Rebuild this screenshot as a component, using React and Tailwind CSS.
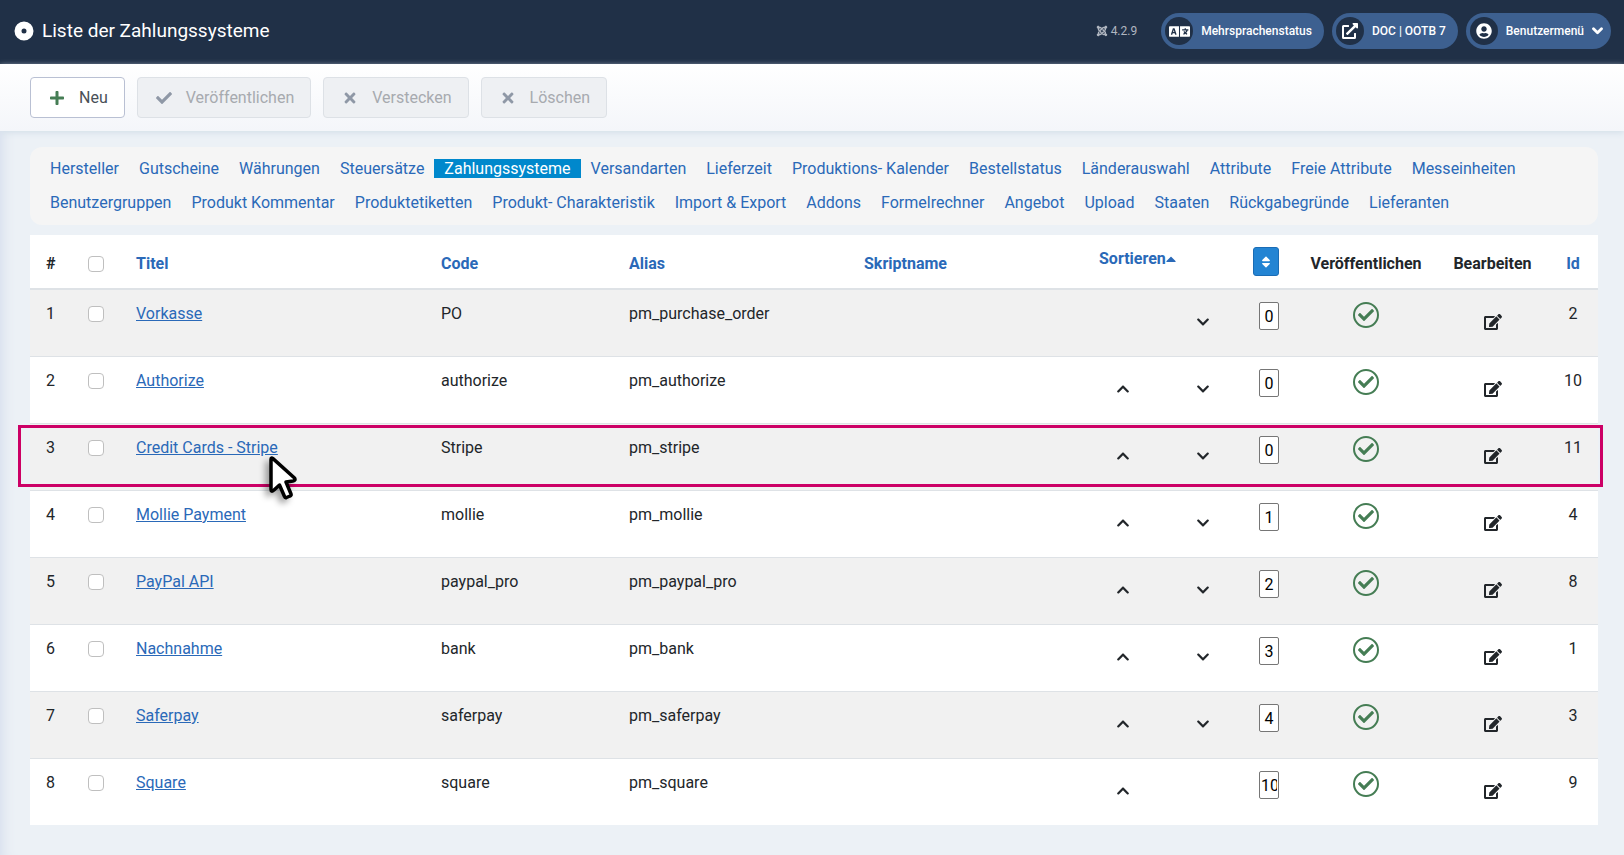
import { useState } from "react";
import {
  FaCaretUp,
  FaCheck,
  FaChevronDown,
  FaChevronUp,
  FaEdit,
  FaExternalLinkAlt,
  FaJoomla,
  FaPlus,
  FaSort,
  FaTimes,
  FaUserCircle,
} from "react-icons/fa";

const menu = [
  "Hersteller",
  "Gutscheine",
  "Währungen",
  "Steuersätze",
  "Zahlungssysteme",
  "Versandarten",
  "Lieferzeit",
  "Produktions- Kalender",
  "Bestellstatus",
  "Länderauswahl",
  "Attribute",
  "Freie Attribute",
  "Messeinheiten",
  "Benutzergruppen",
  "Produkt Kommentar",
  "Produktetiketten",
  "Produkt- Charakteristik",
  "Import & Export",
  "Addons",
  "Formelrechner",
  "Angebot",
  "Upload",
  "Staaten",
  "Rückgabegründe",
  "Lieferanten",
];

const payments = [
  { id: 2, title: "Vorkasse", code: "PO", alias: "pm_purchase_order", order: 0 },
  { id: 10, title: "Authorize", code: "authorize", alias: "pm_authorize", order: 0 },
  { id: 11, title: "Credit Cards - Stripe", code: "Stripe", alias: "pm_stripe", order: 0 },
  { id: 4, title: "Mollie Payment", code: "mollie", alias: "pm_mollie", order: 1 },
  { id: 8, title: "PayPal API", code: "paypal_pro", alias: "pm_paypal_pro", order: 2 },
  { id: 1, title: "Nachnahme", code: "bank", alias: "pm_bank", order: 3 },
  { id: 3, title: "Saferpay", code: "saferpay", alias: "pm_saferpay", order: 4 },
  { id: 9, title: "Square", code: "square", alias: "pm_square", order: 10 },
];

const MARKED_ID = 11;

function LanguageIcon() {
  return (
    <svg viewBox="0 0 640 512" className="h-[17px] w-[21px]" fill="currentColor" aria-hidden="true">
      <path d="M152.1 236.2c-3.5-12.1-7.8-33.2-7.8-33.2h-.5s-4.3 21.1-7.8 33.2l-11.1 37.5H163zM616 96H336v320h280c13.3 0 24-10.7 24-24V120c0-13.3-10.7-24-24-24zm-24 120c0 6.6-5.4 12-12 12h-11.4c-6.9 23.6-21.7 47.4-42.7 69.9 8.4 6.4 17.1 12.5 26.1 18 5.5 3.4 7.3 10.5 4.1 16.2l-7.9 13.9c-3.4 5.9-10.9 7.8-16.7 4.3-12.6-7.8-24.5-16.1-35.4-24.9-10.9 8.7-22.7 17.1-35.4 24.9-5.8 3.5-13.3 1.6-16.7-4.3l-7.9-13.9c-3.2-5.6-1.4-12.8 4.2-16.2 9.3-5.7 18-11.7 26.1-18-7.9-8.4-14.9-17-21-25.7-4-5.7-2.2-13.6 3.7-17.1l6.5-3.9 7.3-4.3c5.4-3.2 12.4-1.7 16 3.4 5 7 10.8 14 17.4 20.9 13.5-14.2 23.8-28.9 30-43.2H412c-6.6 0-12-5.4-12-12v-16c0-6.6 5.4-12 12-12h64v-16c0-6.6 5.4-12 12-12h16c6.6 0 12 5.4 12 12v16h64c6.6 0 12 5.4 12 12zM0 120v272c0 13.3 10.7 24 24 24h280V96H24c-13.3 0-24 10.7-24 24zm58.9 216.1L116.4 167c1.7-4.9 6.2-8.1 11.4-8.1h32.5c5.1 0 9.7 3.3 11.4 8.1l57.5 169.1c2.6 7.8-3.1 15.9-11.4 15.9h-22.9a12 12 0 0 1-11.5-8.6l-9.4-31.9h-60.2l-9.1 31.8c-1.5 5.1-6.2 8.7-11.5 8.7H70.3c-8.2 0-14-8.1-11.4-15.9z" />
    </svg>
  );
}

function HeaderPill({ icon, children }) {
  return (
    <button type="button" className="flex h-9 items-center rounded-full bg-[#3d6090] p-1 pr-3 text-xs font-medium text-white">
      <span className="mr-2 flex size-7 items-center justify-center rounded-full bg-[#203047]">{icon}</span>
      {children}
    </button>
  );
}

function ToolbarButton({ icon, disabled, children }) {
  return (
    <button
      type="button"
      disabled={disabled}
      className="flex h-[41px] items-center gap-3 rounded border border-[#b9c0d3] bg-white px-4 text-[#495057] disabled:border-[#dde1e6] disabled:bg-[#eef0f3] disabled:text-[#a7aaaf]"
    >
      <span className="flex w-5 justify-center">{icon}</span>
      {children}
    </button>
  );
}

function SortLink({ children }) {
  return (
    <a href="#" className="text-[#2a69b8]">
      {children}
    </a>
  );
}

function Checkbox({ label }) {
  return (
    <input
      type="checkbox"
      aria-label={label}
      className="my-1 block size-4 appearance-none rounded border border-[#bfbfbf] bg-white checked:bg-[#2a69b8]"
    />
  );
}

function IconButton({ label, children }) {
  return (
    <button type="button" aria-label={label} className="mx-auto flex h-10 w-6 items-center justify-center text-[#22262a]">
      {children}
    </button>
  );
}

function Pointer() {
  return (
    <svg
      viewBox="0 0 28 44"
      className="pointer-events-none absolute top-8 left-[149px] z-20 h-11 w-7 overflow-visible drop-shadow-[-4px_4px_3px_rgba(0,0,0,0.35)]"
    >
      <path
        d="M2 3.5 Q2 1 4 2.6 L25.5 22 Q27 24.5 24 25 L17 26 L22 38 Q22.5 39.5 21 40 L17.5 41.5 Q16 42 15.5 40.5 L10.5 29 L5 34 Q2 36.5 2 33.5 Z"
        fill="#fff"
        stroke="#000"
        strokeWidth="3.5"
        strokeLinejoin="round"
      />
    </svg>
  );
}

export default function App() {
  const [orders, setOrders] = useState(payments.map((p) => p.order));

  const changeOrder = (index, value) => {
    setOrders(orders.map((o, i) => (i === index ? value : o)));
  };

  return (
    <div className="min-h-screen bg-[#ecf1f6] font-[Roboto,'Liberation_Sans',sans-serif] text-base text-[#22262a]">
      <header className="flex h-16 items-center justify-between bg-[#203047] pr-[13px] pb-[2px] pl-[14px]">
        <h1 className="flex items-center gap-2 text-[19px] text-white">
          <svg viewBox="0 0 20 20" className="size-5" aria-hidden="true">
            <circle cx="10" cy="10" r="6" fill="none" stroke="#fff" strokeWidth="7" />
          </svg>
          Liste der Zahlungssysteme
        </h1>
        <div className="flex items-center gap-2">
          <span className="mr-4 flex items-center gap-[3px] text-xs text-[#b0b6c0]">
            <FaJoomla size={12} />
            4.2.9
          </span>
          <HeaderPill icon={<LanguageIcon />}>Mehrsprachenstatus</HeaderPill>
          <HeaderPill icon={<FaExternalLinkAlt size={16} />}>DOC | OOTB 7</HeaderPill>
          <HeaderPill icon={<FaUserCircle size={16} />}>
            Benutzermenü
            <svg viewBox="0 0 11 8" className="-mr-1 ml-2 h-2 w-[11px]" fill="none" aria-hidden="true">
              <path d="M1.5 1.8 L5.5 5.8 L9.5 1.8" stroke="#fff" strokeWidth="2.8" strokeLinejoin="round" strokeLinecap="round" />
            </svg>
          </HeaderPill>
        </div>
      </header>

      <div className="shadow-[inset_14px_0_14px_-12px_#d3dcec]">
        <div className="flex gap-3 bg-linear-to-b from-white to-[#f4f6fa] px-[30px] py-[13px] shadow-[0_2px_6px_#d5e0ea]">
          <ToolbarButton icon={<FaPlus size={16} className="text-[#457d54]" />}>Neu</ToolbarButton>
          <ToolbarButton disabled icon={<FaCheck size={16} className="text-[#8f98a6]" />}>
            Veröffentlichen
          </ToolbarButton>
          <ToolbarButton disabled icon={<FaTimes size={16} className="text-[#8f98a6]" />}>
            Verstecken
          </ToolbarButton>
          <ToolbarButton disabled icon={<FaTimes size={16} className="text-[#8f98a6]" />}>
            Löschen
          </ToolbarButton>
        </div>

        <main className="pt-4 pr-[26px] pb-[30px] pl-[30px]">
          <nav className="rounded-xl bg-[#f5f5f5] px-[10px] py-[5px] leading-[34px]">
            {menu.map((item) => (
              <a
                key={item}
                href="#"
                className={`inline-block px-[10px] ${item === "Zahlungssysteme" ? "text-white" : "text-[#2a69b8]"}`}
              >
                {item === "Zahlungssysteme" ? (
                  <span className="-mx-[10px] bg-[#0088cc] px-[10px]">{item}</span>
                ) : (
                  item
                )}
              </a>
            ))}
          </nav>

          <table className="mt-[10px] w-full table-fixed border-separate border-spacing-0 bg-white text-left">
            <colgroup>
              <col className="w-[42px]" />
              <col className="w-12" />
              <col />
              <col className="w-[188px]" />
              <col className="w-[235px]" />
              <col className="w-[235px]" />
              <col className="w-20" />
              <col className="w-20" />
              <col className="w-[52px]" />
              <col className="w-[142px]" />
              <col className="w-[111px]" />
              <col className="w-[50px]" />
            </colgroup>
            <thead>
              <tr className="align-bottom *:border-b-2 *:border-[#dee2e6] *:py-3 *:font-bold">
                <th className="pl-4">#</th>
                <th className="pl-4">
                  <Checkbox label="Alle auswählen" />
                </th>
                <th className="px-4">
                  <SortLink>Titel</SortLink>
                </th>
                <th className="px-4">
                  <SortLink>Code</SortLink>
                </th>
                <th className="px-4">
                  <SortLink>Alias</SortLink>
                </th>
                <th className="px-4">
                  <SortLink>Skriptname</SortLink>
                </th>
                <th colSpan={2} className="px-4 align-top">
                  <a href="#" className="flex items-center text-[#2a69b8]">
                    Sortieren
                    <FaCaretUp size={16} className="-ml-[3px]" />
                  </a>
                </th>
                <th className="pr-4">
                  <button
                    type="button"
                    aria-label="Reihenfolge speichern"
                    className="ml-auto flex h-[29px] w-[26px] items-center justify-center rounded-[3px] border border-[#1a6cb5] bg-[#2384d3] text-white"
                  >
                    <FaSort size={14} />
                  </button>
                </th>
                <th className="text-center">Veröffentlichen</th>
                <th className="text-center">Bearbeiten</th>
                <th className="text-center">
                  <SortLink>Id</SortLink>
                </th>
              </tr>
            </thead>
            <tbody>
              {payments.map((p, i) => (
                <tr
                  key={p.id}
                  className="relative h-[67px] align-top odd:bg-[#f1f1f1] last:h-[66px] *:border-b *:border-[#dee2e6] *:pt-3 last:*:border-b-0"
                >
                  <td className="pl-4">
                    {i + 1}
                    {p.id === MARKED_ID && (
                      <span className="pointer-events-none absolute top-px -right-[5px] bottom-1 -left-3 z-10 border-3 border-[#cc0066]" />
                    )}
                  </td>
                  <td className="pl-4">
                    <Checkbox label={p.title} />
                  </td>
                  <td className="relative px-4">
                    <a href="#" className="text-[#2a69b8] underline">
                      {p.title}
                    </a>
                    {p.id === MARKED_ID && <Pointer />}
                  </td>
                  <td className="px-4">{p.code}</td>
                  <td className="px-4">{p.alias}</td>
                  <td className="px-4"></td>
                  <td>
                    {i > 0 && (
                      <IconButton label="Nach oben">
                        <FaChevronUp size={14} />
                      </IconButton>
                    )}
                  </td>
                  <td>
                    {i < payments.length - 1 && (
                      <IconButton label="Nach unten">
                        <FaChevronDown size={14} />
                      </IconButton>
                    )}
                  </td>
                  <td className="pr-4">
                    <input
                      type="text"
                      aria-label={`Reihenfolge ${p.title}`}
                      value={orders[i]}
                      onChange={(e) => changeOrder(i, e.target.value)}
                      className={`ml-auto block h-7 w-5 rounded-xs border border-[#767676] bg-white px-px text-black ${p.order > 9 ? "text-left" : "text-center"}`}
                    />
                  </td>
                  <td>
                    <button
                      type="button"
                      aria-label="Veröffentlicht"
                      className="mx-auto flex size-[26px] items-center justify-center rounded-full border-2 border-[#457d54] text-[#457d54]"
                    >
                      <FaCheck size={16} />
                    </button>
                  </td>
                  <td>
                    <IconButton label="Bearbeiten">
                      <FaEdit size={18} />
                    </IconButton>
                  </td>
                  <td className="text-center">{p.id}</td>
                </tr>
              ))}
            </tbody>
          </table>
        </main>
      </div>
    </div>
  );
}
